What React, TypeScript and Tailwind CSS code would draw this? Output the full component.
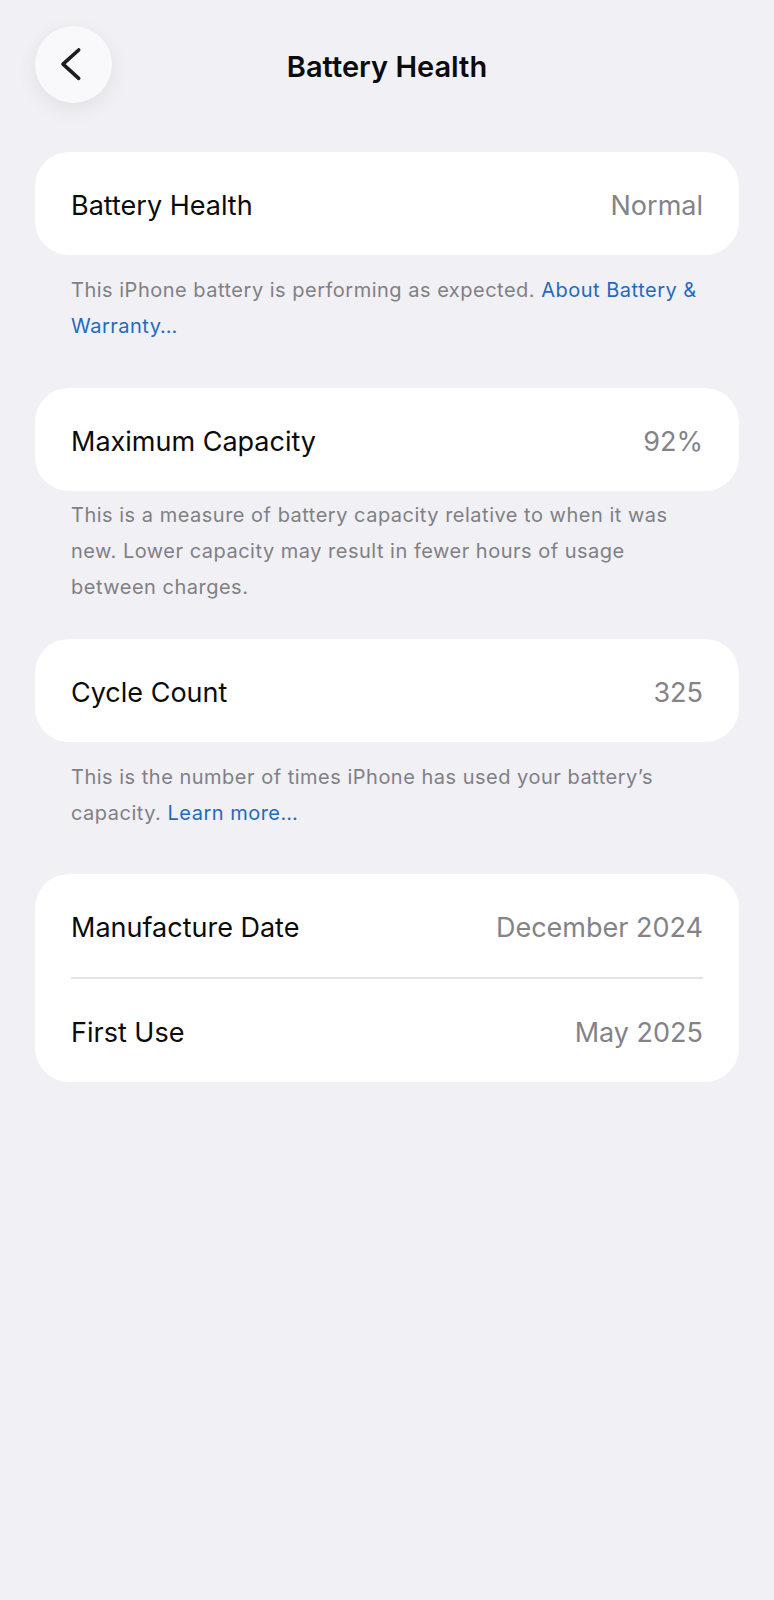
import type { ReactNode } from "react";

type Row = { label: string; value: string };

const font = { fontFamily: "Inter, 'Noto Sans', sans-serif" };

const Card = ({ rows }: { rows: Row[] }) => (
  <div className="rounded-[34px] bg-white">
    {rows.map((r, i) => (
      <div key={r.label}>
        {i > 0 && <div className="mx-[36px] h-[2px] bg-[#e3e3e8]" />}
        <div className="flex h-[103px] items-center justify-between px-[36px] pt-[3px] text-[27px] leading-none">
          <span className="text-[#0b0b0c]">{r.label}</span>
          <span className="text-[#838388]">{r.value}</span>
        </div>
      </div>
    ))}
  </div>
);

const Footer = ({ children, className }: { children: ReactNode; className: string }) => (
  <p className={`px-[36px] text-[20px] leading-[36px] tracking-[0.5px] text-[#808085] ${className}`}>{children}</p>
);

const Link = ({ children }: { children: ReactNode }) => <span className="text-[#1f6bbd]">{children}</span>;

const BackButton = () => (
  <button className="flex h-[77px] w-[77px] items-center justify-center rounded-full bg-[#f9f9fb] shadow-[0_6px_20px_rgba(0,0,0,0.07)]">
    <svg width="77" height="77" viewBox="0 0 77 77" fill="none">
      <path d="M43.7 24 L28 38.2 L43.7 52.3" stroke="#1c1c1e" strokeWidth="3.6" strokeLinecap="round" strokeLinejoin="round" />
    </svg>
  </button>
);

export default function App() {
  return (
    <div className="min-h-[1600px] bg-[#f0f0f5] px-[35px] pt-[26px]" style={font}>
      <header className="grid grid-cols-[77px_1fr_77px] items-center">
        <BackButton />
        <h1 className="pt-[4px] text-center text-[29px] font-semibold text-[#0b0b0c]">Battery Health</h1>
        <div />
      </header>

      <div className="mt-[49px]">
        <Card rows={[{ label: "Battery Health", value: "Normal" }]} />
        <Footer className="mt-[17px] mb-[44px]">
          This iPhone battery is performing as expected. <Link>About Battery &amp; Warranty…</Link>
        </Footer>

        <Card rows={[{ label: "Maximum Capacity", value: "92%" }]} />
        <Footer className="mt-[6px] mb-[34px]">
          This is a measure of battery capacity relative to when it was new. Lower capacity may result in fewer hours of
          usage between charges.
        </Footer>

        <Card rows={[{ label: "Cycle Count", value: "325" }]} />
        <Footer className="mt-[17px] mb-[43px]">
          This is the number of times iPhone has used your battery’s capacity. <Link>Learn more…</Link>
        </Footer>

        <Card
          rows={[
            { label: "Manufacture Date", value: "December 2024" },
            { label: "First Use", value: "May 2025" },
          ]}
        />
      </div>
    </div>
  );
}
